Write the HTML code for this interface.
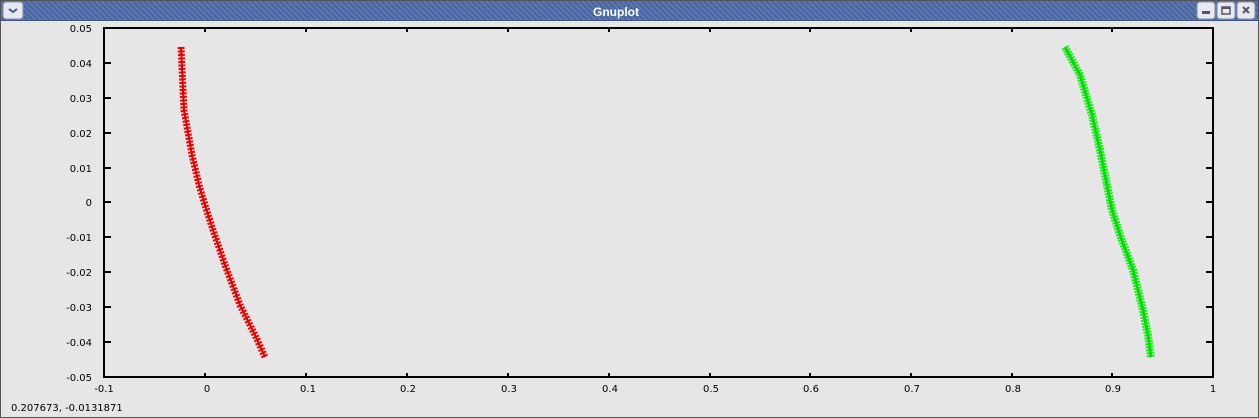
<!DOCTYPE html><html><head><style>
html,body{margin:0;padding:0;width:1259px;height:418px;overflow:hidden;background:#e6e6e6;font-family:"DejaVu Sans","Liberation Sans",sans-serif}
</style></head><body>
<svg width="1259" height="418" xmlns="http://www.w3.org/2000/svg" font-family="DejaVu Sans, Liberation Sans, sans-serif">
<defs>
<pattern id="st" width="4" height="4" patternUnits="userSpaceOnUse" patternTransform="rotate(-45)">
<rect width="4" height="4" fill="#5b78b0"/><rect width="2" height="4" fill="#4865a0"/></pattern>
<pattern id="rp" width="6" height="4" patternUnits="userSpaceOnUse"><rect width="6" height="4" fill="#ff0000"/><rect y="2" width="6" height="1" fill="#b00000"/></pattern>
</defs>
<rect x="0" y="0" width="1259" height="418" fill="#e6e6e6"/>
<rect x="0.5" y="0.5" width="1258" height="417" fill="none" stroke="#555"/>
<rect x="1" y="1" width="1257" height="20" fill="url(#st)"/>
<rect x="1" y="20" width="1257" height="1" fill="#40588a"/>
<text x="616" y="16" font-size="12" font-weight="bold" fill="#fff" text-anchor="middle" font-family="Liberation Sans, sans-serif">Gnuplot</text>
<rect x="3" y="2" width="20" height="17" rx="3" fill="#e8e8ee" stroke="#8090b0"/>
<path d="M9 9 l4 3 l4 -3" stroke="#40588a" stroke-width="2" fill="none"/>
<g fill="#e8e8ee" stroke="#8090b0">
<rect x="1197" y="2" width="18" height="17" rx="3"/><rect x="1217" y="2" width="18" height="17" rx="3"/><rect x="1237" y="2" width="18" height="17" rx="3"/></g>
<rect x="1202" y="11" width="8" height="3" fill="#556"/>
<rect x="1222" y="7" width="8" height="7" fill="none" stroke="#556" stroke-width="1.5"/><rect x="1222" y="7" width="8" height="2" fill="#556"/>
<path d="M1243 7 l6 6 M1249 7 l-6 6" stroke="#556" stroke-width="2"/>
<rect x="104" y="28" width="1109" height="349" fill="none" stroke="#000" stroke-width="2"/>
<g stroke="#000" stroke-width="2">
<path d="M104 63h7M104 98h7M104 133h7M104 168h7M104 202h7M104 237h7M104 272h7M104 307h7M104 342h7"/>
<path d="M1213 63h-7M1213 98h-7M1213 133h-7M1213 168h-7M1213 202h-7M1213 237h-7M1213 272h-7M1213 307h-7M1213 342h-7"/>
<path d="M205 377v-4M306 377v-4M407 377v-4M508 377v-4M609 377v-4M710 377v-4M810 377v-4M911 377v-4M1012 377v-4M1112 377v-4"/>
<path d="M205 28v4M306 28v4M407 28v4M508 28v4M609 28v4M710 28v4M810 28v4M911 28v4M1012 28v4M1112 28v4"/>
</g>
<g font-size="10" fill="#000" text-anchor="end">
<text x="92" y="32">0.05</text><text x="92" y="67">0.04</text><text x="92" y="102">0.03</text><text x="92" y="137">0.02</text><text x="92" y="172">0.01</text><text x="92" y="206">0</text><text x="92" y="241">-0.01</text><text x="92" y="276">-0.02</text><text x="92" y="311">-0.03</text><text x="92" y="346">-0.04</text><text x="92" y="381">-0.05</text>
</g>
<g font-size="10" fill="#000" text-anchor="middle">
<text x="104" y="392">-0.1</text><text x="207" y="392">0</text><text x="308" y="392">0.1</text><text x="408" y="392">0.2</text><text x="509" y="392">0.3</text><text x="610" y="392">0.4</text><text x="711" y="392">0.5</text><text x="811" y="392">0.6</text><text x="912" y="392">0.7</text><text x="1013" y="392">0.8</text><text x="1113" y="392">0.9</text><text x="1213" y="392">1</text>
</g>
<text x="11" y="411" font-size="10" fill="#000">0.207673, -0.0131871</text>
<polyline points="181,47 184,110 192,155 199,185 205,205 213,230 225,265 240,305 255,335 265,357" fill="none" stroke="#ff0000" stroke-width="7" stroke-dasharray="2 1.5"/>
<polyline points="181,47 184,110 192,155 199,185 205,205 213,230 225,265 240,305 255,335 265,357" fill="none" stroke="#e00000" stroke-width="2"/>
<polyline points="1065,47 1080,75 1092,115 1100,150 1106,180 1112,210 1120,235 1133,270 1143,310 1148,335 1151,357" fill="none" stroke="#22ee22" stroke-width="8" stroke-dasharray="2 1"/>
<polyline points="1065,47 1080,75 1092,115 1100,150 1106,180 1112,210 1120,235 1133,270 1143,310 1148,335 1151,357" fill="none" stroke="#00e000" stroke-width="3"/>
</svg>
</body></html>
